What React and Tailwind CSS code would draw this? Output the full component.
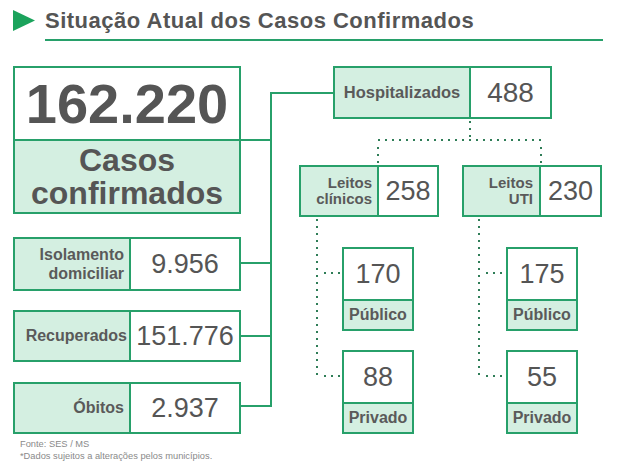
import React from "react";

const G = "border-[#27a06a]";

function SplitH({ label, value, labelW, labelCls, valueCls, h, align = "justify-end text-right" }) {
  return (
    <div className={`flex border-2 ${G} bg-white`}>
      <div className={`${labelW} ${h} shrink-0 border-r-2 ${G} bg-[#d4efe1] flex items-center ${align} ${labelCls}`}>
        {label}
      </div>
      <div className={`flex-1 flex items-center justify-center ${valueCls}`}>{value}</div>
    </div>
  );
}

function SubBox({ value, label, mt = "" }) {
  return (
    <div className={`w-[72px] h-[84px] border-2 ${G} flex flex-col ${mt}`}>
      <div className="h-[50px] flex items-center justify-center text-[27px] text-[#555] leading-none">{value}</div>
      <div className={`flex-1 border-t-2 ${G} bg-[#d4efe1] flex items-center justify-center text-[16px] font-bold text-[#5a5a5a] leading-none`}>
        {label}
      </div>
    </div>
  );
}

export default function App() {
  return (
    <div
      className="relative w-[625px] h-[467px] bg-white overflow-hidden"
      style={{ fontFamily: '"Liberation Sans", Arial, sans-serif' }}
    >
      {/* Header */}
      <div className="flex items-center pl-[13px] pt-[8px]">
        <svg width="22" height="21" viewBox="0 0 22 21" className="shrink-0">
          <polygon points="0,0 22,10.5 0,21" fill="#1ba35c" />
        </svg>
        <div className="ml-[10px] h-[25px] leading-[25px] text-[22px] tracking-[0.5px] font-bold text-[#555]">
          Situação Atual dos Casos Confirmados
        </div>
      </div>
      <div className="ml-[45px] mt-[6px] w-[558px] h-[2px] bg-[#27a06a]" />

      {/* Diagram */}
      <div className="flex pl-[13px] mt-[25px]">
        {/* Left column */}
        <div className="w-[228px] flex flex-col">
          <div className={`h-[148px] border-2 ${G} flex flex-col`}>
            <div className="h-[71px] flex items-center justify-center text-[56px] font-bold text-[#555] leading-none">
              162.220
            </div>
            <div className={`flex-1 border-t-2 ${G} bg-[#d4efe1] flex flex-col items-center justify-center text-[32px] font-bold text-[#555] leading-[33px]`}>
              <span>Casos</span>
              <span>confirmados</span>
            </div>
          </div>

          <div className="mt-[23px]">
            <SplitH
              label={<span>Isolamento<br />domiciliar</span>}
              value="9.956"
              labelW="w-[116px]"
              h="h-[50px]"
              labelCls="pr-[5px] text-[16px] leading-[19px] font-bold text-[#5a5a5a]"
              valueCls="text-[27px] text-[#555] leading-none"
            />
          </div>
          <div className="mt-[19px]">
            <SplitH
              label="Recuperados"
              value="151.776"
              labelW="w-[116px]"
              h="h-[48px]"
              labelCls="pr-[2px] text-[16px] leading-none font-bold text-[#5a5a5a]"
              valueCls="text-[27px] text-[#555] leading-none"
            />
          </div>
          <div className="mt-[20px]">
            <SplitH
              label="Óbitos"
              value="2.937"
              labelW="w-[116px]"
              h="h-[48px]"
              labelCls="pr-[5px] text-[16px] leading-none font-bold text-[#5a5a5a]"
              valueCls="text-[27px] text-[#555] leading-none"
            />
          </div>
        </div>

        {/* Right area */}
        <div className="flex flex-col">
          <div className="ml-[92px] w-[219px]">
            <SplitH
              label="Hospitalizados"
              value="488"
              labelW="w-[136px]"
              h="h-[49px]"
              align="justify-center text-center"
              labelCls="text-[16.5px] leading-none font-bold text-[#5a5a5a]"
              valueCls="text-[28px] text-[#555] leading-none"
            />
          </div>
          <div className="flex mt-[46px]">
            <div className="ml-[58px] w-[140px]">
              <SplitH
                label={<span>Leitos<br />clínicos</span>}
                value="258"
                labelW="w-[78px]"
                h="h-[48px]"
                labelCls="pr-[5px] text-[15px] leading-[16px] font-bold text-[#5a5a5a]"
                valueCls="text-[27px] text-[#555] leading-none"
              />
            </div>
            <div className="ml-[23px] w-[140px]">
              <SplitH
                label={<span>Leitos<br />UTI</span>}
                value="230"
                labelW="w-[77px]"
                h="h-[48px]"
                labelCls="pr-[6px] text-[15px] leading-[16px] font-bold text-[#5a5a5a]"
                valueCls="text-[27px] text-[#555] leading-none"
              />
            </div>
          </div>
          <div className="flex mt-[30px]">
            <div className="ml-[101px] flex flex-col">
              <SubBox value="170" label="Público" />
              <SubBox value="88" label="Privado" mt="mt-[19px]" />
            </div>
            <div className="ml-[92px] flex flex-col">
              <SubBox value="175" label="Público" />
              <SubBox value="55" label="Privado" mt="mt-[19px]" />
            </div>
          </div>
        </div>
      </div>

      {/* Footer */}
      <div className="pl-[20px] mt-[4px] text-[9.3px] leading-[12px] text-[#8a8a8a]">
        <div>Fonte: SES / MS</div>
        <div>*Dados sujeitos a alterações pelos municípios.</div>
      </div>

      {/* Connectors overlay */}
      <svg
        className="absolute top-0 left-0 pointer-events-none"
        width="625"
        height="467"
        viewBox="0 0 625 467"
      >
        <g stroke="#27a06a" strokeWidth="2" fill="none">
          <path d="M241 140 H272" />
          <path d="M271 92 V407" />
          <path d="M270 93 H334" />
          <path d="M241 263 H271" />
          <path d="M241 336 H271" />
          <path d="M241 406 H271" />
        </g>
        <g stroke="#2f7d57" strokeWidth="2" fill="none" strokeDasharray="2 5">
          <path d="M470 121 V140" />
          <path d="M378 140 H542" />
          <path d="M378 147 V165" />
          <path d="M541 147 V165" />
          <path d="M317 219 V378" />
          <path d="M324 273 H342" />
          <path d="M324 376 H342" />
          <path d="M479 219 V378" />
          <path d="M486 273 H506" />
          <path d="M486 376 H506" />
        </g>
      </svg>
    </div>
  );
}
